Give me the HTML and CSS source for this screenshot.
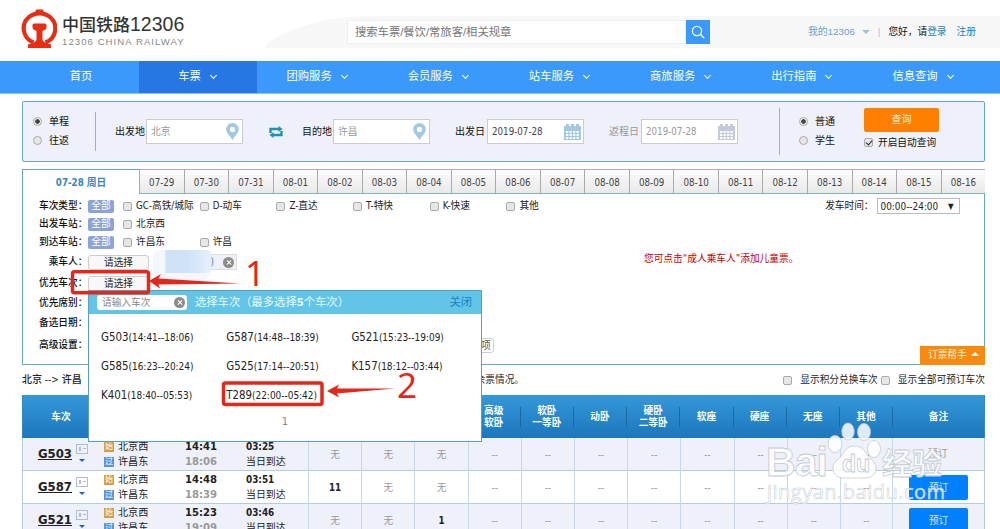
FILE: index.html
```html
<!DOCTYPE html>
<html lang="zh-CN">
<head>
    <meta charset="UTF-8">
    <title>中国铁路12306</title>
    <link rel="stylesheet" href="styles.css">
</head>
<body>
    <header class="header">
        <svg class="header-shape" viewBox="0 0 735 32" preserveAspectRatio="none"><path d="M0 31C4 22 42 4 85 1L110 0H735V32H2Q0 32 0 31Z" fill="#f7f7f7"/></svg>
        <div class="logo">
            <svg width="36" height="40" viewBox="0 0 36 40">
                <path d="M12.500 33.500C1 29 0 15 7.500 8.500C13.500 3 23.500 3 29.500 8.500C37 15 36 29 24.500 33.500" fill="none" stroke="#e62e14" stroke-width="4.200"/>
                <path d="M15 .5h7l1 4h-9zM13 14.500h11q1.500 0 1.500 1.500v2.500q0 2-2 2.500l-2 1v9q.5 2 8.500 4.500v3.500H7v-3.500q8-2.500 8.500-4.500v-9l-2-1q-2-.5-2-2.500V16q0-1.500 1.500-1.500z" fill="#e62e14"/>
            </svg>
            <div class="logo-text">
                <h1>中国铁路<span>12306</span></h1>
                <p>12306 CHINA RAILWAY</p>
            </div>
        </div>
        <div class="site-search">
            <div class="site-search-input">搜索车票/餐饮/常旅客/相关规章</div>
            <div class="site-search-btn">
                <svg width="14" height="14" viewBox="0 0 14 14" fill="none" stroke="#fff" stroke-width="1.3"><circle cx="6" cy="6" r="4.600"/><path d="M9.300 9.300l4 4"/></svg>
            </div>
        </div>
        <div class="user-links">
            <span class="my">我的12306</span><i class="caret"></i><span class="bar">|</span>
            <span class="hello">您好，请<a>登录</a></span><a>注册</a>
        </div>
    </header>

    <nav class="nav">
        <div class="nav-item home">首页</div>
        <div class="nav-item active">车票<i></i></div>
        <div class="nav-item">团购服务<i></i></div>
        <div class="nav-item">会员服务<i></i></div>
        <div class="nav-item">站车服务<i></i></div>
        <div class="nav-item">商旅服务<i></i></div>
        <div class="nav-item">出行指南<i></i></div>
        <div class="nav-item">信息查询<i></i></div>
    </nav>

    <main class="container">
        <section class="query">
            <div class="radios trip">
                <label><i class="radio on"></i>单程</label>
                <label><i class="radio"></i>往返</label>
            </div>
            <div class="field from">
                <span>出发地</span>
                <div class="input dim">北京<svg width="13" height="17" viewBox="0 0 13 17"><path fill-rule="evenodd" d="M6.500 0a6.300 6.300 0 0 1 6.300 6.300C12.800 10 9 13 6.500 17C4 13 .2 10 .2 6.300A6.300 6.300 0 0 1 6.500 0zm0 3.800a2.600 2.600 0 1 0 0 5.200a2.600 2.600 0 0 0 0-5.200z" fill="#a3c8e2"/></svg></div>
            </div>
            <svg class="swap" width="14" height="12" viewBox="0 0 14 12"><path d="M1.500 7V3H10M12.500 5V9H4" fill="none" stroke="#1f93ad" stroke-width="2.400"/><path d="M9.500 0L13.500 3L9.500 6zM4.500 6L.5 9L4.500 12z" fill="#1f93ad"/></svg>
            <div class="field to">
                <span>目的地</span>
                <div class="input dim">许昌<svg width="13" height="17" viewBox="0 0 13 17"><path fill-rule="evenodd" d="M6.500 0a6.300 6.300 0 0 1 6.300 6.300C12.800 10 9 13 6.500 17C4 13 .2 10 .2 6.300A6.300 6.300 0 0 1 6.500 0zm0 3.800a2.600 2.600 0 1 0 0 5.200a2.600 2.600 0 0 0 0-5.200z" fill="#a3c8e2"/></svg></div>
            </div>
            <div class="field depart">
                <span>出发日</span>
                <div class="input">2019-07-28<svg class="cal" width="17" height="16" viewBox="0 0 17 16"><path d="M0 2h2V0h3v2h2V0h3v2h2V0h3v2h2v14H0z" fill="#a3c8e2"/><path d="M2 8h13M2 11h13M2 14h13" stroke="#fff" stroke-width="2" stroke-dasharray="2.300 1.200"/></svg></div>
            </div>
            <div class="field back">
                <span>返程日</span>
                <div class="input">2019-07-28<svg class="cal" width="17" height="16" viewBox="0 0 17 16"><path d="M0 2h2V0h3v2h2V0h3v2h2V0h3v2h2v14H0z" fill="#c3cad9"/><path d="M2 8h13M2 11h13M2 14h13" stroke="#fff" stroke-width="2" stroke-dasharray="2.300 1.200"/></svg></div>
            </div>
            <div class="radios kind">
                <label><i class="radio on"></i>普通</label>
                <label><i class="radio"></i>学生</label>
            </div>
            <div class="submit">
                <div class="query-btn">查询</div>
                <label><i class="check on"></i>开启自动查询</label>
            </div>
        </section>

        <section class="panel">
            <div class="tabs">
                <div class="tab active">07-28 周日</div>
                <div class="tab">07-29</div>
                <div class="tab">07-30</div>
                <div class="tab">07-31</div>
                <div class="tab">08-01</div>
                <div class="tab">08-02</div>
                <div class="tab">08-03</div>
                <div class="tab">08-04</div>
                <div class="tab">08-05</div>
                <div class="tab">08-06</div>
                <div class="tab">08-07</div>
                <div class="tab">08-08</div>
                <div class="tab">08-09</div>
                <div class="tab">08-10</div>
                <div class="tab">08-11</div>
                <div class="tab">08-12</div>
                <div class="tab">08-13</div>
                <div class="tab">08-14</div>
                <div class="tab">08-15</div>
                <div class="tab">08-16</div>
            </div>
            <div class="filters">
                <div class="filter">
                    <b>车次类型：</b><em>全部</em>
                    <div class="options">
                        <label><i class="check"></i>GC-高铁/城际</label>
                        <label><i class="check"></i>D-动车</label>
                        <label><i class="check"></i>Z-直达</label>
                        <label><i class="check"></i>T-特快</label>
                        <label><i class="check"></i>K-快速</label>
                        <label><i class="check"></i>其他</label>
                    </div>
                    <div class="depart-time">发车时间：<div class="select">00:00--24:00<span>▼</span></div></div>
                </div>
                <div class="filter">
                    <b>出发车站：</b><em>全部</em>
                    <div class="options"><label><i class="check"></i>北京西</label></div>
                </div>
                <div class="filter">
                    <b>到达车站：</b><em>全部</em>
                    <div class="options"><label><i class="check"></i>许昌东</label><label><i class="check"></i>许昌</label></div>
                </div>
                <div class="filter passenger">
                    <b>乘车人：</b><div class="choose">请选择</div>
                    <div class="person"><span>)</span><i class="clear"></i></div>
                    <p class="tip">您可点击“成人乘车人”添加儿童票。</p>
                </div>
                <div class="filter train"><b>优先车次：</b><div class="choose">请选择</div></div>
                <div class="filter seat"><b>优先席别：</b></div>
                <div class="filter day"><b>备选日期：</b></div>
                <div class="filter adv"><b>高级设置：</b><div class="more">选项</div></div>
            </div>
            <div class="helper">订票帮手<i></i></div>
        </section>

        <div class="summary">
            <span class="route">北京 --&gt; 许昌</span>
            <span class="remain">余票情况。</span>
            <label><i class="check"></i>显示积分兑换车次</label>
            <label><i class="check"></i>显示全部可预订车次</label>
        </div>

        <section class="table">
            <div class="row head">
                <div>车次</div><div></div><div></div><div></div><div></div><div></div><div></div>
                <div class="sep">高级<br>软卧</div><div class="sep">软卧<br>一等卧</div><div class="sep">动卧</div><div class="sep">硬卧<br>二等卧</div>
                <div class="sep">软座</div><div class="sep">硬座</div><div class="sep">无座</div><div class="sep">其他</div><div>备注</div>
            </div>
            <div class="row odd">
                <div class="code"><a>G503</a><span><i class="card"></i><i class="down"></i></span></div>
                <div class="station"><p><i class="start">始</i>北京西</p><p><i class="pass">过</i>许昌东</p></div>
                <div class="time"><b>14:41</b><b>18:06</b></div>
                <div class="cost"><b>03:25</b><span>当日到达</span></div>
                <div class="cell">无</div><div class="cell">无</div><div class="cell">无</div><div class="cell">--</div><div class="cell">--</div><div class="cell">--</div><div class="cell">--</div><div class="cell">--</div><div class="cell">--</div><div class="cell">--</div><div class="cell">--</div>
                <div class="book off">预订</div>
            </div>
            <div class="row">
                <div class="code"><a>G587</a><span><i class="card"></i><i class="down"></i></span></div>
                <div class="station"><p><i class="start">始</i>北京西</p><p><i class="pass">过</i>许昌东</p></div>
                <div class="time"><b>14:48</b><b>18:39</b></div>
                <div class="cost"><b>03:51</b><span>当日到达</span></div>
                <div class="cell"><b>11</b></div><div class="cell">无</div><div class="cell">无</div><div class="cell">--</div><div class="cell">--</div><div class="cell">--</div><div class="cell">--</div><div class="cell">--</div><div class="cell">--</div><div class="cell">--</div><div class="cell">--</div>
                <div class="book"><span>预订</span></div>
            </div>
            <div class="row odd">
                <div class="code"><a>G521</a><span><i class="card"></i><i class="down"></i></span></div>
                <div class="station"><p><i class="start">始</i>北京西</p><p><i class="pass">过</i>许昌东</p></div>
                <div class="time"><b>15:23</b><b>19:09</b></div>
                <div class="cost"><b>03:46</b><span>当日到达</span></div>
                <div class="cell">无</div><div class="cell">无</div><div class="cell"><b>1</b></div><div class="cell">--</div><div class="cell">--</div><div class="cell">--</div><div class="cell">--</div><div class="cell">--</div><div class="cell">--</div><div class="cell">--</div><div class="cell">--</div>
                <div class="book"><span>预订</span></div>
            </div>
        </section>
    </main>

    <div class="popup">
        <div class="popup-head">
            <div class="popup-input">请输入车次<i class="clear"></i></div>
            <span>选择车次（最多选择<b>5</b>个车次）</span>
            <a>关闭</a>
        </div>
        <div class="trains">
            <div>G503<small>(14:41--18:06)</small></div>
            <div>G587<small>(14:48--18:39)</small></div>
            <div>G521<small>(15:23--19:09)</small></div>
            <div>G585<small>(16:23--20:24)</small></div>
            <div>G525<small>(17:14--20:51)</small></div>
            <div>K157<small>(18:12--03:44)</small></div>
            <div>K401<small>(18:40--05:53)</small></div>
            <div>T289<small>(22:00--05:42)</small></div>
        </div>
        <div class="page">1</div>
    </div>

    <!-- step marks -->
    <svg class="marks" width="1000" height="529" viewBox="0 0 1000 529">
        <g fill="none" stroke="#e0281c" stroke-width="3.500">
            <rect x="72.500" y="271.700" width="76" height="21" rx="2"/>
            <rect x="223.500" y="383" width="98.500" height="21.500" rx="2"/>
        </g>
        <g fill="#e0281c">
            <path d="M149 281L161 274L158.500 278.500L240 283.500L158.500 284.500L160 288.500Z"/>
            <path d="M327 391L339 384.500L337 388.500L395 388.500L337 393.500L339 397.500Z"/>
            <text x="245" y="286">1</text>
            <text x="397" y="398">2</text>
        </g>
    </svg>

    <svg class="watermark" width="190" height="90" viewBox="0 0 190 90">
        <g fill="#fff" fill-opacity=".85" stroke="#c3cad3" stroke-width=".8">
            <ellipse cx="75" cy="24" rx="7" ry="8.500"/>
            <ellipse cx="88" cy="11.500" rx="6.200" ry="8.500"/>
            <ellipse cx="104" cy="12" rx="6.500" ry="8.500"/>
            <ellipse cx="114" cy="29" rx="6.500" ry="8.500"/>
            <path d="M94 26C84 26 84 36 77 40C70 45 72 58 83 58C88 58 100 58 105 58C118 58 119 45 111 39C105 34 105 26 94 26Z"/>
            <text class="wm-bai" x="6" y="56" textLength="62">Bai</text>
            <text class="wm-du" x="82" y="52">du</text>
            <text class="wm-cn" x="122" y="54" textLength="60">经验</text>
            <text class="wm-url" x="7" y="79" textLength="178">jingyan.baidu.com</text>
        </g>
    </svg>
</body>
</html>
```

FILE: styles.css
```css
* {
    box-sizing: border-box;
}
body {
    width: 1000px;
    height: 529px;
    margin: 0;
    overflow: hidden;
    position: relative;
    background: #fff;
    color: #222;
    font-family: "DejaVu Sans Condensed", "Noto Sans CJK SC", sans-serif;
    font-size: 9.7px;
    line-height: 14px;
    white-space: nowrap;
}
h1, p {
    margin: 0;
}
i, em {
    font-style: normal;
}
label {
    display: flex;
    align-items: center;
}

/* header */
.header {
    height: 61px;
    display: flex;
    position: relative;
    font-family: "Liberation Sans", "Noto Sans CJK SC", sans-serif;
}
.header-shape {
    position: absolute;
    left: 265px;
    top: 16px;
    width: 735px;
    height: 32px;
}
.logo {
    display: flex;
    width: 325px;
    padding: 9px 0 0 21px;
}
.logo-text {
    padding-left: 5px;
}
.logo h1 {
    padding-top: 3px;
    font-size: 17px;
    font-weight: 500;
    line-height: 24px;
    color: #333;
}
.logo h1 span {
    font-size: 19.5px;
    font-weight: 400;
}
.logo p {
    margin-top: -1px;
    font-size: 9.6px;
    line-height: 10px;
    letter-spacing: 1.05px;
    color: #888;
}
.site-search {
    position: relative;
    display: flex;
    height: 24px;
    margin: 20px 0 0 22px;
    color: #777;
    font-size: 11.3px;
}
.site-search-input {
    width: 339px;
    padding-left: 7px;
    background: #fff;
    border: 1px solid #eee;
    line-height: 22px;
}
.site-search-btn {
    width: 24px;
    background: #3b99fc;
    display: flex;
    align-items: center;
    justify-content: center;
}
.user-links {
    position: relative;
    display: flex;
    align-items: center;
    height: 32px;
    margin: 16px 0 0 98px;
}
.user-links a {
    color: #2b7fbd;
}
.user-links .my {
    font-size: 9.8px;
    color: #6ba3d0;
}
.caret {
    margin-left: 7px;
    border: 4px solid transparent;
    border-top-color: #9fc2dc;
    border-bottom: none;
}
.bar {
    color: #9fc2dc;
    margin: 0 8px;
}
.hello {
    color: #111;
    margin-right: 10px;
}

/* nav */
.nav {
    height: 33px;
    display: flex;
    padding-left: 23px;
    background: #3b99fc;
    border-bottom: 1px solid #8cc0f0;
    color: #fff;
    font-size: 11.3px;
}
.nav-item {
    width: 121.200px;
    display: flex;
    align-items: center;
    justify-content: center;
}
.nav-item.home {
    width: 116px;
}
.nav-item.active {
    width: 118px;
    background: #2676e3;
}
.nav-item i {
    width: 5px;
    height: 5px;
    margin: -3px 2px 0 10px;
    border: solid #fff;
    border-width: 0 1px 1px 0;
    transform: rotate(45deg);
}

/* query bar */
.container {
    width: 963px;
    margin: 7px 0 0 22px;
}
.query {
    height: 61px;
    display: flex;
    align-items: center;
    background: #eef1f9;
    border: 1px solid #6ba5be;
    border-radius: 2px;
    color: #111;
    font-size: 10px;
}
.radio {
    width: 9px;
    height: 9px;
    margin-right: 7px;
    border: 1px solid #a9a9a9;
    border-radius: 50%;
    background: #e6e6e6;
}
.radio.on {
    background: radial-gradient(circle, #444 0 2px, #eee 2.500px);
}
.radios label {
    height: 19px;
}
.trip {
    width: 73px;
    height: 39px;
    padding-left: 10px;
    border-right: 1px solid #85b9cb;
}
.field {
    display: flex;
    align-items: center;
}
.field .input {
    width: 97px;
    height: 25px;
    display: flex;
    align-items: center;
    justify-content: space-between;
    padding: 0 3px 0 4px;
    margin-left: 1px;
    border: 1px solid #ccc;
    background: #fff;
    color: #444;
    font-size: 9.7px;
}
.field .input.dim {
    color: #999;
}
.field .cal {
    margin-right: -1px;
}
.from {
    margin-left: 19px;
}
.swap {
    margin: 0 19px 0 26px;
}
.depart {
    margin-left: 25px;
}
.depart .input, .back .input {
    margin-left: 2px;
}
.back {
    margin-left: 25px;
}
.back, .back .input {
    color: #999;
}
.kind {
    height: 47px;
    margin-left: 41px;
    padding: 4px 0 0 19px;
    border-left: 1px solid #85b9cb;
}
.submit {
    margin-left: 29px;
}
.query-btn {
    width: 75px;
    height: 24px;
    border-radius: 2px;
    background: #ff8000;
    color: #fff2dc;
    text-align: center;
    line-height: 24px;
}
.submit label {
    margin-top: 4px;
    margin-bottom: 6px;
    font-size: 9.7px;
}
.check {
    width: 9px;
    height: 9px;
    flex: none;
    margin-right: 5px;
    border: 1px solid #aaa;
    border-radius: 2px;
    background: #e6e6e6;
}
.check.on::after {
    content: "";
    display: block;
    width: 3px;
    height: 5px;
    margin: 0 0 0 2px;
    border: solid #222;
    border-width: 0 1.500px 1.500px 0;
    transform: rotate(40deg);
}

/* filter panel */
.panel {
    position: relative;
    height: 196px;
    margin-top: 7px;
    border: solid #6ba5be;
    border-width: 0 1px 1px;
}
.tabs {
    display: flex;
    height: 25px;
    margin: 0 -1px;
}
.tab {
    flex: 1;
    border: solid #aaa;
    border-width: 1px 0 1px 1px;
    border-top-color: #b5a9ad;
    border-bottom-color: #7fb4bd;
    background: linear-gradient(#fcfcfc, #e9e9e9);
    color: #444;
    text-align: center;
    line-height: 25px;
}
.tab.active {
    flex: none;
    width: 117px;
    border-color: #6ba5be;
    border-bottom: none;
    background: #fff;
    color: #3d84b8;
    font-weight: bold;
}
.filters {
    padding: 3px 0 0 16px;
}
.filter {
    height: 18px;
    display: flex;
    align-items: center;
}
.filter b {
    width: 49px;
    font-weight: 500;
    color: #111;
}
.filter em {
    width: 26px;
    height: 13px;
    border-radius: 2px;
    background: #8ca3d5;
    color: #fff;
    text-align: center;
    line-height: 12px;
}
.options {
    display: flex;
    padding-left: 9px;
}
.options label {
    width: 76.700px;
}
.options .check {
    margin-right: 4px;
}
.depart-time {
    display: flex;
    align-items: center;
    margin-left: 242px;
}
.select {
    width: 83px;
    height: 16px;
    display: flex;
    justify-content: space-between;
    padding: 0 5px 0 3px;
    margin-left: 3px;
    border: 1px solid #bbb;
    line-height: 15px;
    font-size: 9.9px;
}
.select span {
    font-size: 8px;
}
.choose {
    width: 61px;
    height: 15px;
    border: 1px solid #ccc;
    border-radius: 3px;
    background: #f8f8f8;
    text-align: center;
    line-height: 13px;
}
.passenger {
    height: 22px;
}
.passenger b {
    padding-left: 9.700px;
}
.person {
    position: relative;
    width: 79px;
    height: 16px;
    display: flex;
    align-items: center;
    justify-content: flex-end;
    margin-left: 9px;
    border: 1px solid #ddd;
    background: #eef1f9;
    color: #3d84b8;
}
.person::before {
    content: "";
    position: absolute;
    left: -6px;
    top: -5px;
    width: 58px;
    height: 23px;
    border-radius: 8px 4px 10px 12px;
    background: linear-gradient(90deg, #f3f8fe 20%, #cfe2f8 22% 60%, #e6f0fb);
    border-bottom: 8px solid #f4f8fd;
}
.person .clear {
    margin: 0 2px 0 9px;
}
.clear {
    position: relative;
    width: 11px;
    height: 11px;
    border-radius: 50%;
    background: #8b8b8b;
}
.clear::before, .clear::after {
    content: "";
    position: absolute;
    left: 2.500px;
    top: 5px;
    width: 6px;
    height: 1.200px;
    background: #fff;
    transform: rotate(45deg);
}
.clear::after {
    transform: rotate(-45deg);
}
.tip {
    margin-left: 407px;
    margin-top: -6px;
    color: #c00000;
}
.train {
    height: 20px;
}
.seat {
    height: 20px;
}
.day {
    height: 20px;
}
.adv {
    height: 24px;
}
.more {
    width: 26px;
    height: 15px;
    margin-left: 380px;
    border: 1px solid #ccc;
    border-radius: 3px;
    text-align: center;
    line-height: 13px;
    color: #555;
}
.helper {
    position: absolute;
    right: -1px;
    bottom: -1px;
    width: 65px;
    height: 19px;
    padding-left: 8px;
    background: #f98a10;
    color: #fff2dc;
    line-height: 18px;
}
.helper i {
    display: inline-block;
    margin: 0 0 2px 4px;
    border: 4px solid transparent;
    border-bottom-color: #fff;
    border-top: none;
}

.summary {
    height: 30px;
    display: flex;
    align-items: center;
    color: #222;
}
.route {
    width: 454px;
    font-size: 10px;
    font-weight: 500;
}
.remain {
    width: 308px;
}
.summary .check {
    margin-right: 8px;
}
.summary label:last-child {
    margin-left: 3px;
}

/* tickets */
.row {
    height: 33px;
    display: grid;
    grid-template-columns: 76px 80px 64px 65px repeat(11, 53.200px) 1fr;
    border: solid #b5ccdd;
    border-width: 0 1px 1px;
}
.row.odd {
    background: #eef1f9;
}
.row.head {
    height: 43px;
    align-items: center;
    border-color: #3187c6;
    border-bottom: none;
    background: linear-gradient(#3598d8, #1c76bd);
    color: #fff;
    font-weight: bold;
    line-height: 12px;
    text-align: center;
}
.head div {
    height: 24px;
    display: grid;
    align-content: center;
}
.head .sep {
    height: 20px;
    border-right: 1px solid #1a68a5;
}
.code {
    display: flex;
    padding: 4px 0 0 15px;
}
.code a {
    padding-top: 5px;
    font-size: 13px;
    font-weight: bold;
    text-decoration: underline;
}
.code span {
    margin: 2px 0 0 4px;
}
.card {
    display: block;
    width: 12px;
    height: 10px;
    border: 1px solid #aebdd6;
    background: linear-gradient(#aebdd6, #aebdd6) 2px 2px / 2px 4px no-repeat, linear-gradient(#aebdd6, #aebdd6) 6px 3px / 3px 1px no-repeat;
}
.down {
    display: block;
    width: 0;
    margin: 5px 0 0 3px;
    border: 3.500px solid transparent;
    border-top-color: #1768c4;
    border-bottom: none;
}
.station {
    padding: 2px 0 0 5px;
    font-size: 10.100px;
}
.station p {
    display: flex;
    align-items: center;
    height: 14.500px;
}
.station i {
    width: 10px;
    height: 10px;
    margin-right: 4px;
    background: #d1a04b;
    color: #fff;
    font-size: 8px;
    line-height: 10px;
    text-align: center;
}
.station i.pass {
    background: #5b93d6;
}
.time, .cost {
    display: flex;
    flex-direction: column;
    padding: 2px 0 0 6px;
    font-size: 11.200px;
    line-height: 14.500px;
}
.time b + b {
    color: #999;
}
.cost {
    padding-left: 3px;
    font-size: 9.900px;
}
.cell {
    border-left: 1px solid #c5d9e8;
    text-align: center;
    line-height: 33px;
    color: #999;
}
.cell:nth-child(15) {
    border-right: 1px solid #c5d9e8;
}
.cell b {
    color: #222;
}
.book {
    padding: 4px 0 0 16px;
}
.book span {
    display: block;
    width: 59px;
    height: 25px;
    border-radius: 2px;
    background: #0080ff;
    color: #d5eaff;
    line-height: 25px;
    text-align: center;
}
.book.off {
    padding: 9px 0 0 35px;
    color: #999;
}

/* train picker */
.popup {
    position: absolute;
    left: 88px;
    top: 290px;
    width: 394px;
    height: 152px;
    border: 1px solid #5b9fbe;
    background: #fff;
}
.popup-head {
    height: 23px;
    display: flex;
    align-items: center;
    padding: 0 9px 0 8px;
    background: #62c5e8;
    color: #e8fbff;
    font-size: 11.300px;
}
.popup-input {
    width: 90px;
    height: 15px;
    display: flex;
    align-items: center;
    justify-content: space-between;
    padding: 0 2px 0 5px;
    margin-right: 8px;
    border-radius: 3px;
    background: #fff;
    color: #888;
    font-size: 9.700px;
}
.popup-head a {
    margin-left: auto;
    color: #1c7fc0;
}
.trains {
    display: grid;
    grid-template-columns: repeat(3, 125.200px);
    grid-auto-rows: 29px;
    padding: 9px 0 0 12px;
    font-size: 11.400px;
    line-height: 29px;
}
.trains small {
    font-size: 9.950px;
}
.page {
    color: #888;
    font-size: 11px;
    text-align: center;
    line-height: 23px;
}

.marks {
    position: absolute;
    left: 0;
    top: 0;
    font-family: "Noto Sans", sans-serif;
    font-size: 35px;
}
.watermark {
    position: absolute;
    left: 760px;
    top: 420px;
    font-family: "Liberation Sans", "Noto Sans CJK SC", sans-serif;
}
.wm-bai {
    font-size: 41px;
    font-weight: bold;
}
.wm-du {
    font-size: 23px;
    font-weight: bold;
}
.wm-cn {
    font-size: 30px;
    font-weight: bold;
}
.wm-url {
    font-family: "Open Sans", sans-serif;
    font-size: 20px;
    stroke-width: .5;
}
```
